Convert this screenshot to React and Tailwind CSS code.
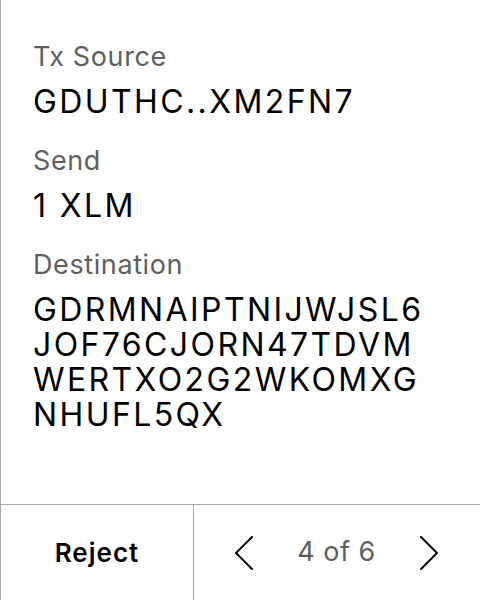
const rows = [
  { label: "Tx Source", lines: ["GDUTHC..XM2FN7"] },
  { label: "Send", lines: ["1 XLM"] },
  {
    label: "Destination",
    lines: ["GDRMNAIPTNIJWJSL6", "JOF76CJORN47TDVM", "WERTXO2G2WKOMXG", "NHUFL5QX"],
  },
];

function Chevron({ dir }) {
  return (
    <svg width="18" height="34" viewBox="0 0 18 34" fill="none">
      <polyline
        points={dir === "left" ? "17,1 1,17 17,33" : "1,1 17,17 1,33"}
        stroke="black"
        strokeWidth="2"
        strokeLinecap="round"
        strokeLinejoin="round"
      />
    </svg>
  );
}

export default function App() {
  return (
    <div
      className="h-[600px] w-[480px] bg-white border-l border-[#a8a8a8] flex flex-col"
      style={{ fontFamily: "Inter, 'Noto Sans', sans-serif" }}
    >
      {/* details */}
      <div className="flex-1 pl-[32px] pr-[30px] pt-[41px]">
        {rows.map((row) => (
          <div key={row.label} className="mb-[26px]">
            <p className="text-[27px] leading-[32px] tracking-[0.6px] text-[#5f5f5f]">
              {row.label}
            </p>
            <p className="mt-[11px] text-[32px] leading-[35px] tracking-[2.4px] text-black">
              {row.lines.map((line) => (
                <span key={line} className="block">
                  {line}
                </span>
              ))}
            </p>
          </div>
        ))}
      </div>

      {/* footer */}
      <div className="h-[96px] border-t border-[#a8a8a8] flex">
        <button className="w-[192px] flex items-center justify-center text-[26px] font-semibold tracking-[1px] text-black">
          Reject
        </button>
        <div className="flex-1 border-l border-[#a8a8a8] flex items-center justify-between pl-[41px] pr-[42px]">
          <Chevron dir="left" />
          <span className="text-[27px] tracking-[0.5px] text-[#5f5f5f]">4 of 6</span>
          <Chevron dir="right" />
        </div>
      </div>
    </div>
  );
}
